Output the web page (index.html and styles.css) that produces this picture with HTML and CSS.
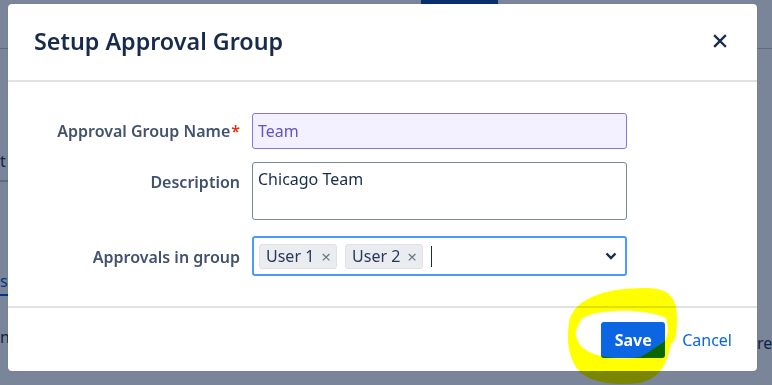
FILE: index.html
```html
<!doctype html>
<html lang="en">
  <head>
    <meta charset="UTF-8" />
    <title>Setup Approval Group</title>
    <link rel="stylesheet" href="styles.css">
  </head>
  <body>
    <!-- page behind the dialog -->
    <div class="page">
      <div class="page-header">
        <div class="nav-tab"></div>
      </div>
      <div class="page-body">
        <div class="side side-left">
          <div class="side-row row-title">t</div>
          <div class="side-row row-link"><a href="#">s</a></div>
          <div class="side-row row-text">nt</div>
        </div>
        <div class="side side-right">
          <div class="side-row row-text">re</div>
        </div>
      </div>
    </div>
    <div class="blanket"></div>

    <div class="modal" role="dialog">
      <div class="modal-header">
        <h1>Setup Approval Group</h1>
        <button class="close" aria-label="Close">
          <svg viewBox="0 0 14 14" width="14" height="14">
            <path d="M2 2 L12 12 M12 2 L2 12" stroke="currentColor" stroke-width="2.4" stroke-linecap="square" />
          </svg>
        </button>
      </div>

      <form class="modal-body">
        <label class="field-label center">Approval Group Name<span class="req">*</span></label>
        <input class="input input-name" type="text" value="Team" />

        <label class="field-label top">Description</label>
        <textarea class="input textarea">Chicago Team</textarea>

        <label class="field-label center low">Approvals in group</label>
        <div class="select">
          <span class="tag">User 1 <span class="tag-x">×</span></span>
          <span class="tag">User 2 <span class="tag-x">×</span></span>
          <span class="caret"></span>
          <svg class="chevron" viewBox="0 0 12 8" width="12" height="8">
            <path d="M1.5 1.5 L6 6 L10.5 1.5" fill="none" stroke="currentColor" stroke-width="2.4" />
          </svg>
        </div>
      </form>

      <div class="modal-footer">
        <button class="btn btn-primary">Save</button>
        <a href="#" class="btn-link">Cancel</a>
      </div>
    </div>

    <!-- highlighter mark drawn over the screenshot -->
    <svg class="marker" viewBox="0 0 772 385" width="772" height="385">
      <path fill-rule="evenodd" fill="#ffff00"
        d="M569 322 C573 298 608 287 648 288 C670 289 677 298 677 318 C677 333 676 341 671 344 C668 360 662 378 640 383 C612 386 590 382 579 371 C569 359 566 342 569 322 Z
           M583 318 C598 309 645 308 666 318 C669 329 668 337 664 342 C655 347 650 352 640 357 C620 360 596 358 583 348 C577 342 575 335 576 331 C578 326 579 322 583 318 Z" />
    </svg>
  </body>
</html>
```

FILE: styles.css
```css
:root {
  --text: #172b4d;
  --subtle: #42526e;
  --blue: #0c66e4;
  --divider: #dfe1e6;
}

* {
  margin: 0;
  padding: 0;
  box-sizing: border-box;
}

body {
  font-family: "Noto Sans", "Liberation Sans", sans-serif;
  color: var(--text);
  background: #fff;
  width: 772px;
  height: 385px;
  overflow: hidden;
}

/* background page */
.page {
  height: 385px;
}

.page-header {
  height: 49px;
  border-bottom: 1px solid #c1c7d0;
  background: #fff;
}

.nav-tab {
  margin-left: 421px;
  width: 77px;
  height: 4px;
  background: #0747a6;
}

.page-body {
  display: flex;
  justify-content: space-between;
  font-size: 16px;
}

.side {
  display: flex;
  flex-direction: column;
}

.side-left {
  width: 8px;
}

.side-right {
  width: 15px;
  padding-top: 283px;
}

.side-row {
  white-space: nowrap;
}

.row-title {
  padding-top: 101px;
  height: 133px;
  border-bottom: 2px solid #c1c7d0;
}

.row-link {
  padding-top: 88px;
  height: 113px;
}

.row-link a {
  color: #0052cc;
  text-decoration: none;
  border-bottom: 2px solid #0052cc;
  padding-bottom: 2px;
}

.row-text {
  padding-top: 31px;
}

.side-right .row-text {
  padding-top: 0;
}

.blanket {
  position: fixed;
  inset: 0;
  background: rgba(9, 30, 66, 0.54);
}

/* dialog */
.modal {
  position: fixed;
  left: 8px;
  top: 4px;
  width: 749px;
  height: 367px;
  background: #fff;
  border-radius: 4px;
  display: flex;
  flex-direction: column;
  box-shadow: 0 0 1px rgba(9, 30, 66, 0.3);
}

.modal-header {
  height: 78px;
  border-bottom: 2px solid var(--divider);
  display: flex;
  align-items: center;
  justify-content: space-between;
  padding: 0 30px 2px 26px;
}

.modal-header h1 {
  font-size: 23.3px;
  font-weight: 600;
  color: var(--text);
}

.close {
  border: none;
  background: none;
  color: var(--text);
  display: flex;
}

.modal-body {
  flex: 1;
  display: grid;
  grid-template-columns: 232px 375px;
  column-gap: 12px;
  row-gap: 13px;
  padding-top: 31px;
  align-content: start;
  border-bottom: 2px solid var(--divider);
}

.field-label {
  font-size: 16px;
  font-weight: 600;
  color: var(--subtle);
  text-align: right;
  white-space: nowrap;
}

.field-label.center {
  align-self: center;
}

.field-label.low {
  padding-top: 4px;
}

.field-label.top {
  padding-top: 9px;
}

.req {
  color: #de350b;
  margin-left: 1px;
}

.input {
  font-family: inherit;
  font-size: 16px;
  color: var(--text);
  border-radius: 3px;
  outline: none;
}

.input-name {
  height: 36px;
  padding: 0 5px;
  background: #f3f0ff;
  border: 1px solid #8777d9;
  color: #6554c0;
}

.textarea {
  height: 58px;
  padding: 6px 5px;
  border: 1px solid #7a869a;
  resize: none;
  line-height: 1.3;
}

.select {
  height: 40px;
  margin-top: 3px;
  border: 2px solid #4c9aff;
  border-radius: 3px;
  display: flex;
  align-items: center;
  gap: 8px;
  padding: 0 8px 0 5px;
}

.tag {
  height: 25px;
  display: flex;
  align-items: center;
  gap: 7px;
  padding: 0 5px 0 6px;
  background: #ebecf0;
  border: 1px solid #dfe1e6;
  border-radius: 3px;
  font-size: 16px;
  color: #253858;
}

.tag-x {
  color: #6b778c;
  font-size: 17px;
}

.caret {
  width: 1px;
  height: 21px;
  background: var(--text);
}

.chevron {
  margin-left: auto;
  color: var(--text);
}

.modal-footer {
  height: 63px;
  display: flex;
  align-items: center;
  justify-content: flex-end;
  gap: 17px;
  padding-right: 25px;
}

.btn {
  font-family: inherit;
  border: none;
  cursor: pointer;
}

.btn-primary {
  width: 64px;
  height: 36px;
  border-radius: 3px;
  background: var(--blue);
  color: #fff;
  font-size: 16px;
  font-weight: 700;
}

.btn-link {
  color: var(--blue);
  font-size: 16px;
  text-decoration: none;
}

.marker {
  position: fixed;
  left: 0;
  top: 0;
  mix-blend-mode: multiply;
  pointer-events: none;
}
```
